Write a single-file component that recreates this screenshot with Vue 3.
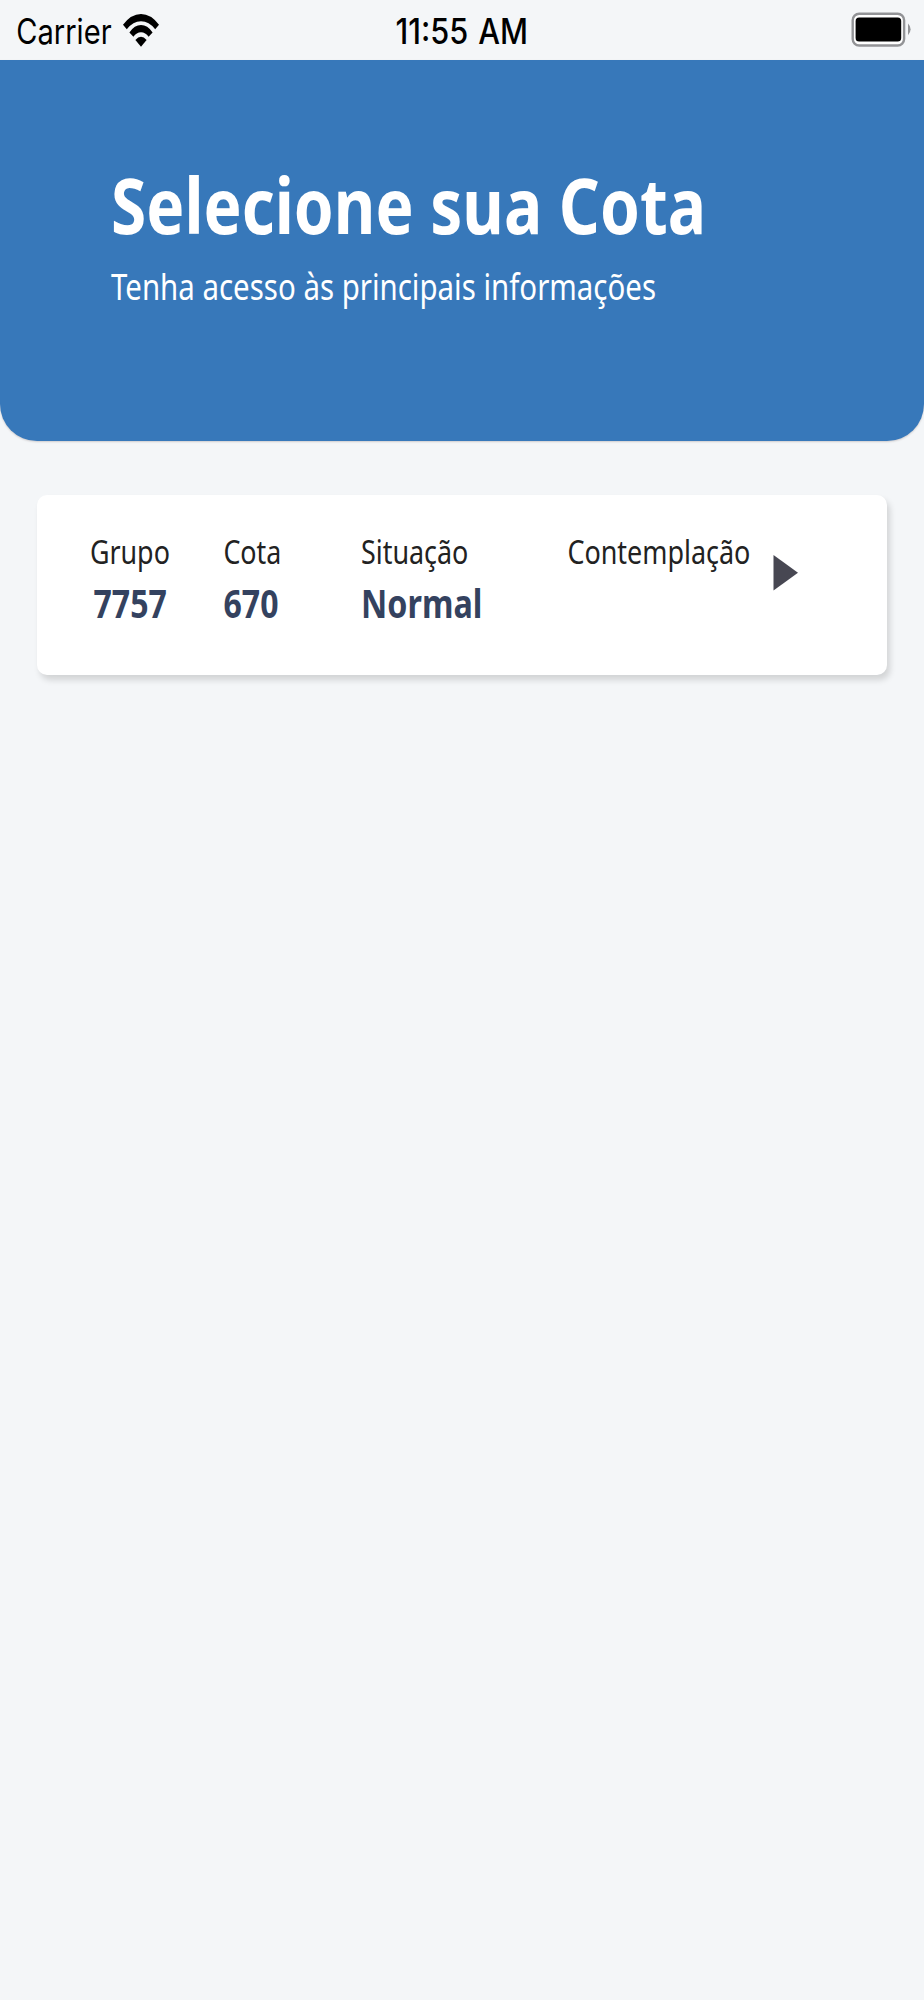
<script setup>
const columns = [
  { key: 'grupo', label: 'Grupo', lw: 80, lx: 89.9, value: '7757', vw: 73.4, vx: 93.5, start: 89 },
  { key: 'cota', label: 'Cota', lw: 58, lx: 223.4, value: '670', vw: 55, vx: 223.5, start: 222 },
  { key: 'situacao', label: 'Situação', lw: 107.4, lx: 361, value: 'Normal', vw: 121.4, vx: 361, start: 359 },
  { key: 'contemplacao', label: 'Contemplação', lw: 183, lx: 567.4, value: '', vw: 0, vx: 0, start: 567 },
]
</script>

<template>
  <main class="screen">
    <div class="status">
      <div class="left">
        <svg class="carrier" width="96" height="60">
          <text x="1.2" y="43.5" textLength="95.4" lengthAdjust="spacingAndGlyphs">Carrier</text>
        </svg>
        <svg class="wifi" width="36" height="33" viewBox="0 0 36 33">
          <path d="M0 10.8Q8 0 18 0T36 10.8L32.2 15.2Q26 7.2 18 7.2T3.8 15.2Z" />
          <path d="M6.4 18.4Q11.5 11 18 11T29.6 18.4L25.6 22.8Q22.5 18.2 18 18.2T10.4 22.8Z" />
          <path d="M12.4 26Q18 19.6 23.6 26L18 32.8Z" />
        </svg>
      </div>
      <svg class="time" width="134" height="60">
        <text x="0.5" y="43.5" textLength="132.5" lengthAdjust="spacingAndGlyphs">11:55 AM</text>
      </svg>
      <svg class="battery" width="60" height="36" viewBox="0 0 60 36">
        <rect x="1.7" y="1.7" width="51.4" height="31.8" rx="6.5" fill="#fff" stroke="#929396" stroke-width="2.4" />
        <rect x="4.6" y="5.6" width="45.6" height="24" rx="3.5" fill="#000" />
        <path d="M57 11.5Q59.6 14 59.6 17.3T57 23.2Z" fill="#929396" />
      </svg>
    </div>

    <header class="hero">
      <svg class="title" width="600" height="100">
        <text x="0" y="74" textLength="595" lengthAdjust="spacingAndGlyphs">Selecione sua Cota</text>
      </svg>
      <svg class="subtitle" width="600" height="50">
        <text x="0" y="40" textLength="545" lengthAdjust="spacingAndGlyphs">Tenha acesso às principais informações</text>
      </svg>
    </header>

    <section class="card">
      <div v-for="c in columns" :key="c.key" class="column">
        <svg class="label" width="120" height="50">
          <text :x="c.lx - c.start" y="34" :textLength="c.lw" lengthAdjust="spacingAndGlyphs">{{ c.label }}</text>
        </svg>
        <svg v-if="c.value" class="value" width="120" height="50">
          <text :x="c.vx - c.start" y="38" :textLength="c.vw" lengthAdjust="spacingAndGlyphs">{{ c.value }}</text>
        </svg>
      </div>
      <svg class="arrow" width="25" height="36" viewBox="0 0 25 36">
        <path d="M0.5 0L25 17.7L0.5 35.5Z" />
      </svg>
    </section>
  </main>
</template>

<style>
body {
  background: #f4f6f8;
}
</style>

<style scoped>
.screen {
  width: 924px;
  height: 2000px;
  overflow: hidden;
  background: #f4f6f8;
  font-family: "Noto Sans", "Open Sans", sans-serif;
}
svg {
  display: block;
  overflow: visible;
  flex: none;
}
.status {
  display: grid;
  grid-template-columns: 395px 456px 1fr;
  height: 60px;
  font-family: Inter, Roboto, sans-serif;
  font-size: 35px;
}
.left {
  display: flex;
  padding-left: 15px;
  gap: 12px;
}
.wifi {
  margin-top: 14px;
}
.time {
  font-weight: 550;
  word-spacing: 2px;
}
.battery {
  margin-top: 12px;
}
.hero {
  box-sizing: border-box;
  height: 381px;
  padding: 100px 0 0 111px;
  background: #3778ba;
  border-radius: 0 0 37px 37px;
  box-shadow: 0 1px 2px rgba(60, 40, 40, 0.2);
}
.hero text {
  fill: #fff;
}
.title {
  font-size: 77.5px;
  font-weight: 700;
}
.subtitle {
  font-size: 36px;
}
.card {
  box-sizing: border-box;
  display: grid;
  grid-template-columns: 133px 137px 208px 206px 1fr;
  width: 850px;
  height: 180px;
  margin: 54px 0 0 37px;
  padding: 35px 0 0 52px;
  background: #fff;
  border-radius: 10px;
  box-shadow: 3px 5px 6px rgba(0, 0, 0, 0.14);
}
.label {
  font-size: 32.5px;
  fill: #222;
}
.value {
  font-size: 39px;
  font-weight: 700;
  fill: #34425f;
}
.arrow {
  margin-top: 25px;
  fill: #474752;
}
</style>
